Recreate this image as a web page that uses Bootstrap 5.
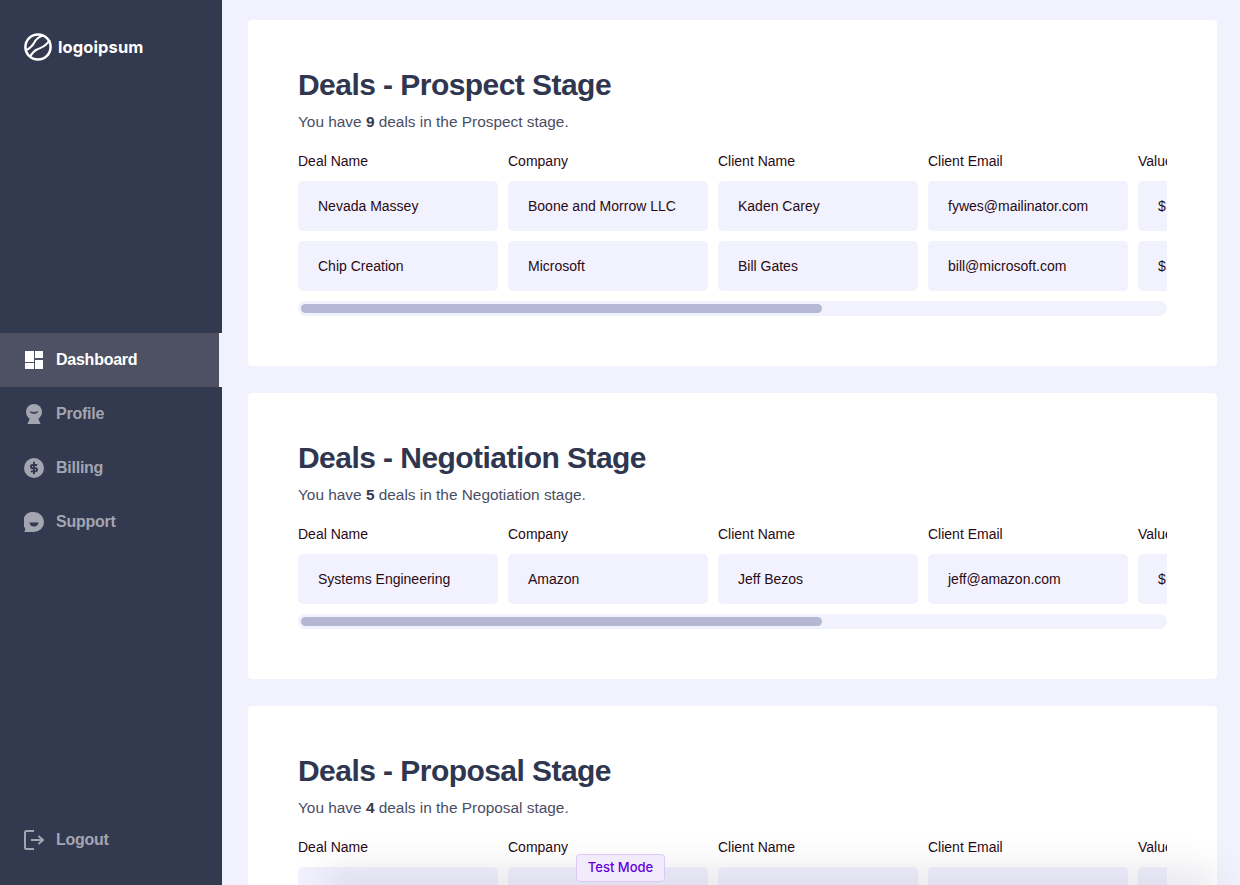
<!DOCTYPE html>
<html lang="en">
<head>
  <meta charset="UTF-8" />
  <meta name="viewport" content="width=device-width, initial-scale=1.0"/>
  <title>Deals</title>
  <link href="https://cdn.jsdelivr.net/npm/bootstrap@5.3.0/dist/css/bootstrap.min.css" rel="stylesheet">
  <style>
    html, body { height: 100%; overflow: hidden; }
    body { background: #f2f2fe; font-family: "Liberation Sans", Arial, sans-serif; color: #2a0a14; }
    .side-bar { width: 222px; height: 100vh; background: #33394e; flex-shrink: 0; }
    .brand-row { height: 94px; padding-left: 24px; gap: 6px; color: #fff; font-family: Inter, sans-serif; font-weight: 700; font-size: 16.5px; letter-spacing: 0.1px; }
    .side-menu { margin-top: 239px; }
    .side-link { height: 54px; padding-left: 24px; gap: 12px; color: #a3a5b0; font-size: 16px; font-weight: 700; letter-spacing: -0.25px; text-decoration: none; }
    .side-link svg { width: 20px; height: 20px; flex-shrink: 0; }
    .side-link.is-active { background: #4e5163; color: #fff; border-right: 3px solid #f2f2fe; }
    .logout-row { position: absolute; bottom: 18px; left: 0; right: 0; }
    .main-area { height: 100vh; overflow: hidden; padding: 20px 23px 0 26px; }
    .stage-card { background: #fff; border-radius: 4px; padding: 50px; margin-bottom: 27px; }
    .stage-title { font-size: 30px; line-height: 30px; font-weight: 700; letter-spacing: -0.55px; color: #2f3650; margin: 0 0 12px; font-family: "Liberation Sans", Arial, sans-serif; }
    .stage-sub { font-size: 15.4px; line-height: 20px; color: #4a4e64; margin: 0 0 19px; }
    .stage-sub b { color: #33394e; }
    .deal-scroll { overflow: hidden; }
    .deal-grid { display: grid; grid-template-columns: repeat(5, 200px); gap: 10px; }
    .head-cell { font-size: 14px; line-height: 20px; height: 20px; white-space: nowrap; }
    .value-cell { background: #f2f2fe; border-radius: 5px; height: 50px; padding: 0 20px; font-size: 14px; display: flex; align-items: center; white-space: nowrap; overflow: hidden; }
    .scroll-track { height: 15px; margin-top: 10px; padding: 3px; background: #f2f2fe; border-radius: 8px; }
    .scroll-thumb { height: 9px; background: #b4b8d2; border-radius: 5px; }
    .bottom-fade { position: fixed; left: 340px; right: 40px; bottom: -12px; height: 12px; box-shadow: 0 0 36px 14px rgba(70,70,110,.14); pointer-events: none; }
    .test-flag { position: fixed; left: 576px; top: 854px; width: 89px; height: 28px; background: #f1ebfb; border: 1px solid #dcc8f8; border-radius: 4px; color: #6200e0; font-family: Inter, sans-serif; font-size: 13px; font-weight: 500; }
  </style>
</head>
<body>
  <div class="d-flex">
    <aside class="side-bar position-relative">
      <div class="brand-row d-flex align-items-center">
        <svg width="28" height="28" viewBox="0 0 28 28" fill="none" stroke="#fff">
          <circle cx="14" cy="14" r="12.6" stroke-width="2.500"/>
          <path d="M2.700 17C6 15 8.500 13 10 10S14 4 19.300 2.500" stroke-width="2"/>
          <path d="M6 24C8 20 10 18 13 16.500S19 14.500 22 11.500 25 8.500 26 7" stroke-width="2"/>
        </svg>
        <span>logoipsum</span>
      </div>
      <nav class="side-menu d-flex flex-column">
        <a href="#" class="side-link is-active d-flex align-items-center">
          <svg viewBox="0 0 20 20" fill="#fff"><rect x="1" y="1" width="9" height="11"/><rect x="1" y="13" width="9" height="6"/><rect x="11" y="1" width="8" height="7"/><rect x="11" y="10" width="8" height="9"/></svg>
          Dashboard
        </a>
        <a href="#" class="side-link d-flex align-items-center">
          <svg viewBox="0 0 20 20" fill="#a3a5b0"><circle cx="10" cy="8" r="8"/><path d="M3.500 20l2.500-6h8l2.500 6z"/><path d="M6 7.500c1 2.800 7 2.800 8 0-1.500 1-6.500 1-8 0z" fill="#33394e" stroke="#33394e" stroke-width=".5"/></svg>
          Profile
        </a>
        <a href="#" class="side-link d-flex align-items-center">
          <svg viewBox="0 0 20 20"><circle cx="10" cy="10" r="10" fill="#a3a5b0"/><path d="M13.200 7H8.500a1.600 1.600 0 0 0 0 3.200h3a1.600 1.600 0 0 1 0 3.200H6.800M10 3.700v12.600" fill="none" stroke="#33394e" stroke-width="1.900"/></svg>
          Billing
        </a>
        <a href="#" class="side-link d-flex align-items-center">
          <svg viewBox="0 0 20 20" fill="#a3a5b0"><path d="M10 0a10 10 0 0 1 0 20H0c1-1 1.500-2.500 1-4A10 10 0 0 1 10 0z"/><path d="M5.500 10.500h9a4.500 4 0 0 1-9 0z" fill="#33394e"/></svg>
          Support
        </a>
      </nav>
      <a href="#" class="side-link logout-row d-flex align-items-center">
        <svg viewBox="0 0 20 20" fill="none" stroke="#a3a5b0" stroke-width="2"><path d="M10 1H2.500A1.500 1.500 0 0 0 1 2.500v15A1.500 1.500 0 0 0 2.500 19H10M7 10h12M14.500 6l4.500 4-4.500 4"/></svg>
        Logout
      </a>
    </aside>

    <main class="main-area flex-grow-1" id="stages"></main>
  </div>

  <div class="bottom-fade"></div>
  <div class="test-flag d-flex align-items-center justify-content-center">Test Mode</div>

  <script>
    const heads = ['Deal Name', 'Company', 'Client Name', 'Client Email', 'Value'];
    const stages = [
      { name: 'Prospect', count: 9, rows: [
        ['Nevada Massey', 'Boone and Morrow LLC', 'Kaden Carey', 'fywes@mailinator.com', '$'],
        ['Chip Creation', 'Microsoft', 'Bill Gates', 'bill@microsoft.com', '$']
      ]},
      { name: 'Negotiation', count: 5, rows: [
        ['Systems Engineering', 'Amazon', 'Jeff Bezos', 'jeff@amazon.com', '$']
      ]},
      { name: 'Proposal', count: 4, rows: [
        ['', '', '', '', '']
      ]}
    ];
    document.getElementById('stages').innerHTML = stages.map(s => `
      <section class="stage-card">
        <h2 class="stage-title">Deals - ${s.name} Stage</h2>
        <p class="stage-sub">You have <b>${s.count}</b> deals in the ${s.name} stage.</p>
        <div class="deal-scroll">
          <div class="deal-grid">
            ${heads.map(h => `<div class="head-cell">${h}</div>`).join('')}
            ${s.rows.map(r => heads.map((h, i) => `<div class="value-cell">${r[i] || ''}</div>`).join('')).join('')}
          </div>
        </div>
        <div class="scroll-track"><div class="scroll-thumb" style="width: 60.4%"></div></div>
      </section>`).join('');
  </script>
  <script src="https://cdn.jsdelivr.net/npm/bootstrap@5.3.0/dist/js/bootstrap.bundle.min.js"></script>
</body>
</html>
